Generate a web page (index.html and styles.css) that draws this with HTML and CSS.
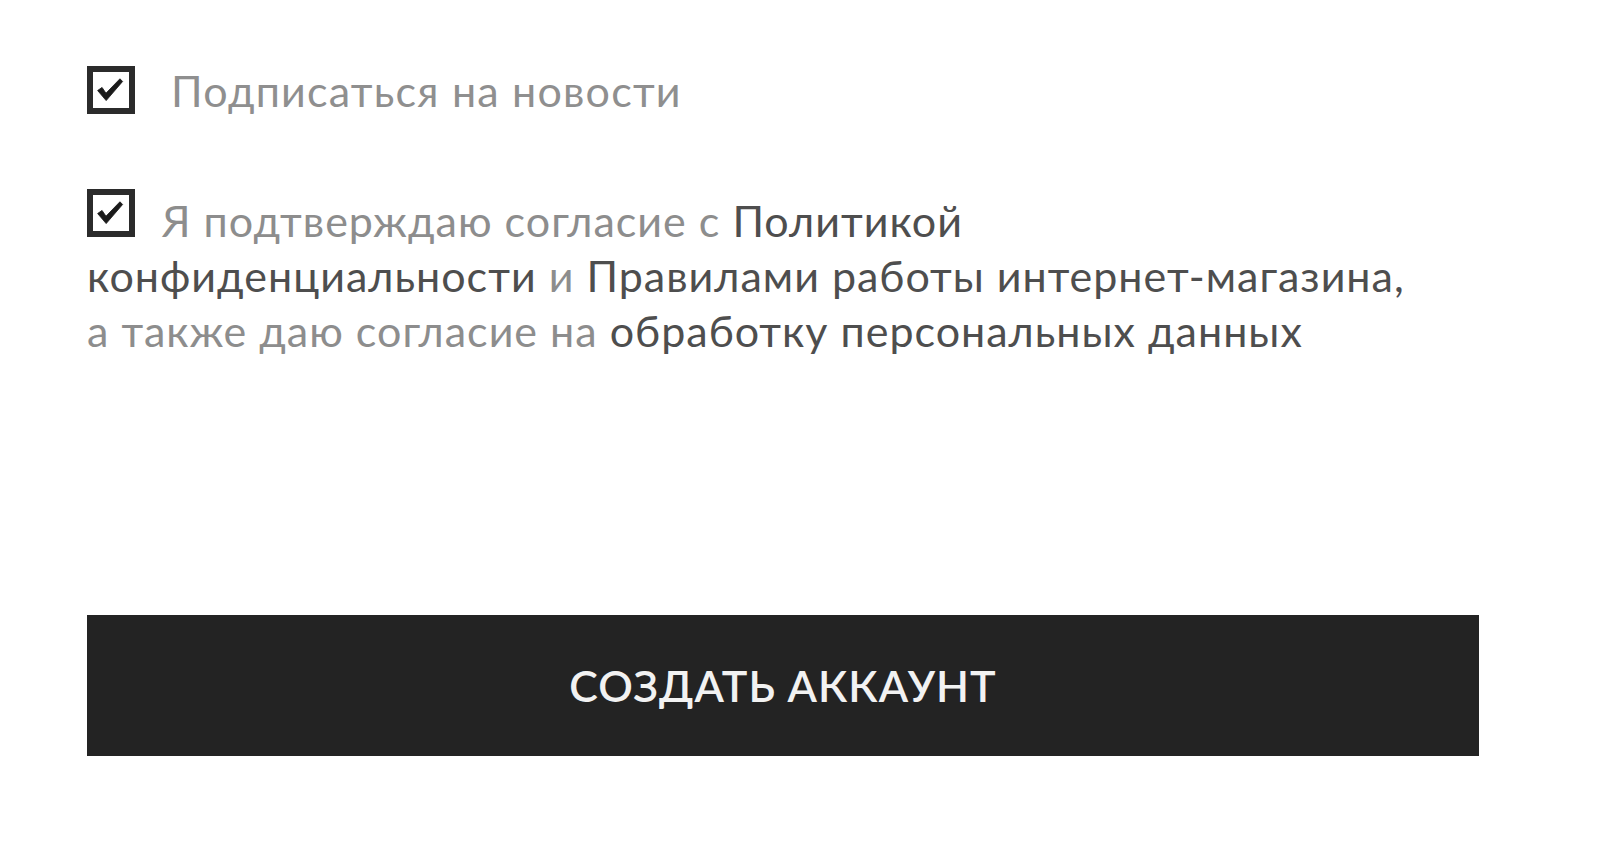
FILE: index.html
```html
<!DOCTYPE html>
<html lang="ru">
<head>
<meta charset="utf-8">
<link rel="stylesheet" href="styles.css">
</head>
<body>
<form class="form">
  <label class="row row-news">
    <span class="box"><svg viewBox="0 0 35 35" class="tick"><path d="M4.5 18 L8.8 15 L12.6 20.6 L26.2 6.6 L28.8 9.2 L12.8 27.8 Z" /></svg></span>
    <span class="news-text">Подписаться на новости</span>
  </label>
  <p class="agree">
    <span class="box box-inline"><svg viewBox="0 0 35 35" class="tick"><path d="M4.5 18 L8.8 15 L12.6 20.6 L26.2 6.6 L28.8 9.2 L12.8 27.8 Z" /></svg></span>
    <span class="muted">Я подтверждаю согласие с</span> <span class="dark">Политикой<br>конфиденциальности</span> <span class="muted">и</span> <span class="dark">Правилами работы интернет-магазина,</span><br><span class="muted">а также даю согласие на</span> <span class="dark">обработку персональных данных</span>
  </p>
  <button type="button" class="submit">СОЗДАТЬ АККАУНТ</button>
</form>
</body>
</html>
```
FILE: styles.css
```css
html, body {
  margin: 0;
  padding: 0;
  background: #ffffff;
}
body {
  font-family: "Lato", "Open Sans", sans-serif;
  color: #8b8b8b;
}
.form {
  width: 1392px;
  padding: 66px 0 0 87px;
  display: flex;
  flex-direction: column;
}
.row {
  display: flex;
  align-items: center;
  gap: 36px;
  height: 48px;
}
.box {
  width: 48px;
  height: 48px;
  box-sizing: border-box;
  border: 6px solid #2b2b2b;
  background: #fff;
  display: inline-block;
  overflow: hidden;
  flex: none;
}
.tick {
  display: block;
  width: 36px;
  height: 36px;
}
.tick path {
  fill: #1a1a1a;
  stroke: #1a1a1a;
  stroke-width: 0.8;
  stroke-linejoin: round;
}
.news-text {
  font-size: 43px;
  letter-spacing: 1.2px;
  line-height: 46px;
  color: #8f8f8f;
  margin-top: 2px;
}
.agree {
  margin: 73px 0 0 0;
  font-size: 43px;
  letter-spacing: 1px;
  line-height: 55px;
  width: 1392px;
  white-space: nowrap;
  padding-top: 2px;
}
.box-inline {
  vertical-align: 0;
  margin-right: 15px;
}
.muted { color: #8d8d8d; }
.dark { color: #4e4e4e; }
.submit {
  margin-top: 257px;
  width: 1392px;
  height: 141px;
  border: 0;
  background: #232323;
  color: #f2f2f2;
  font-family: "Lato", "Open Sans", sans-serif;
  font-size: 43px;
  font-weight: 600;
  letter-spacing: 1px;
  padding: 0;
}
```
